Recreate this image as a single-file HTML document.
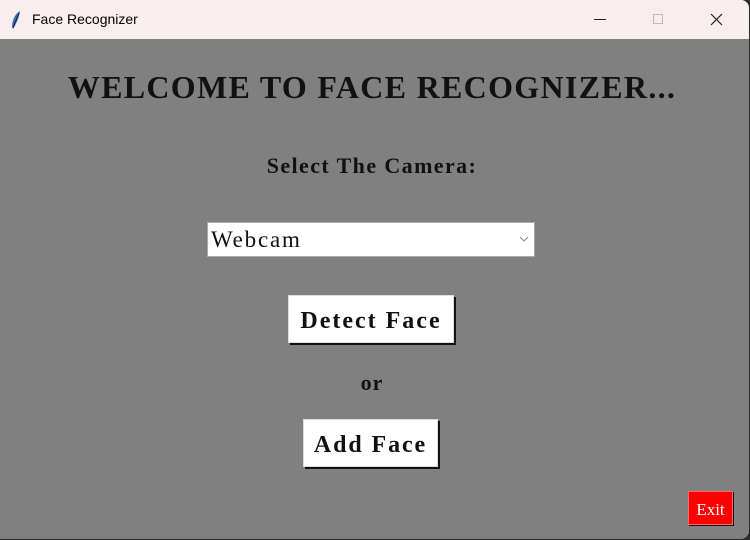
<!DOCTYPE html>
<html><head><style>
*{margin:0;padding:0;box-sizing:border-box}
body{width:750px;height:540px;background:#2b2b2b;position:relative;overflow:hidden;font-family:"Liberation Serif",serif}
#win{position:absolute;left:0;top:0;width:749px;height:539px;background:#808080;border-radius:0 8px 8px 0;overflow:hidden}
#tb{position:absolute;left:0;top:0;width:100%;height:39px;background:#f8eeee;font-family:"Liberation Sans",sans-serif;font-size:14px;color:#000}
.a{position:absolute;white-space:nowrap}
.b{font-weight:bold;color:#111}
.btn{position:absolute;background:#fff;border:1px solid #ddd;box-shadow:2px 2px 0 #111;text-align:center;font-weight:bold;color:#111}
</style></head><body>
<div id="win">
<div id="tb">
<svg class="a" style="left:10px;top:10px" width="12" height="20" viewBox="0 0 12 20"><path d="M10 1 C5 4 2 10 2 17 L3 19 C6 14 9 8 10 1Z" fill="#3d6fb3"/><path d="M3 18 L9 3" stroke="#123" stroke-width="1"/></svg>
<div class="a" style="left:32px;top:11px">Face Recognizer</div>
<div class="a" style="left:594px;top:19px;width:12px;height:1px;background:#222"></div>
<div class="a" style="left:653px;top:14px;width:10px;height:10px;border:1px solid #bbb"></div>
<svg class="a" style="left:710px;top:13px" width="13" height="13"><path d="M1 1L12 12M12 1L1 12" stroke="#222" stroke-width="1.2"/></svg>
</div>
<div class="a b" style="left:0;width:744px;text-align:center;top:69px;font-size:32px;letter-spacing:1.3px">WELCOME TO FACE RECOGNIZER...</div>
<div class="a b" style="left:0;width:744px;text-align:center;top:153px;font-size:22px;letter-spacing:1.4px">Select The Camera:</div>
<div class="a" style="left:207px;top:222px;width:328px;height:35px;background:#fff;border:1px solid #aaa;font-size:23px;letter-spacing:1.8px;padding:4px 0 0 3px;color:#111">Webcam
<svg class="a" style="left:311px;top:13px" width="10" height="7"><path d="M1 1L5 5L9 1" stroke="#888" fill="none"/></svg></div>
<div class="btn" style="left:288px;top:295px;width:166px;height:48px;font-size:24px;line-height:50px;letter-spacing:2px">Detect Face</div>
<div class="a b" style="left:0;width:744px;text-align:center;top:370px;font-size:22px;letter-spacing:1px">or</div>
<div class="btn" style="left:303px;top:419px;width:135px;height:48px;font-size:24px;line-height:50px;letter-spacing:1.9px">Add Face</div>
<div class="a" style="left:688px;top:491px;width:45px;height:34px;background:#f00;border:1px solid #f66;box-shadow:1px 1px 0 #111;color:#fff;font-size:17px;text-align:center;line-height:35px">Exit</div>
</div>
</body></html>
